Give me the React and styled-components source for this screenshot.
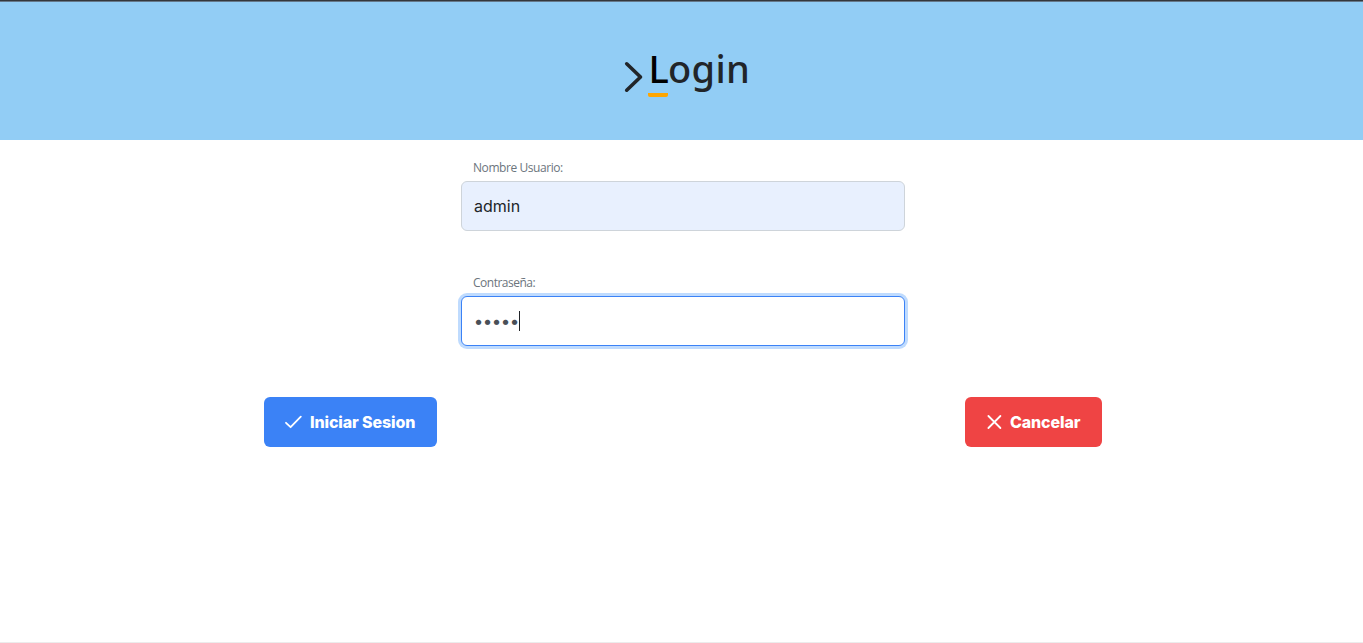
import React from 'react';
import styled, { createGlobalStyle } from 'styled-components';

const GlobalStyle = createGlobalStyle`
  *, *::before, *::after { box-sizing: border-box; }
  body { margin: 0; background: #fff; overflow: hidden; }
`;

const Page = styled.div`
  height: 643px;
  display: flex;
  flex-direction: column;
  border-bottom: 1px solid #ececec;
  font-family: "Inter", "Liberation Sans", sans-serif;
`;

const Header = styled.header`
  height: 140px;
  flex: none;
  display: flex;
  justify-content: center;
  padding: 45px 0 0 10px;
  border-top: 1px solid #34373c;
  box-shadow: inset 0 1px 0 #65788a;
  background: #92cdf5;
`;

const Chevron = styled.svg`
  width: 20px;
  height: 32px;
  margin: 15px 4px 0 0;
  fill: none;
  stroke: #212529;
  stroke-width: 3.6;
  stroke-linecap: round;
  stroke-linejoin: round;
`;

const Title = styled.h1`
  margin: 0;
  width: 101px;
  height: 51px;
  display: flex;
  color: #212529;
  font: 500 38px/44px "Noto Sans", "Open Sans", sans-serif;
  letter-spacing: 0.3px;
`;

const Initial = styled.span`
  width: 20px;
  height: 51px;
  flex: none;
  text-indent: 0.5px;
  color: #000;
  border-bottom: 4px solid orange;
  border-radius: 0 0 2px 2px;
`;

const Form = styled.form`
  display: flex;
  flex-direction: column;
  padding: 19px 261px 0 264px;
`;

const Fields = styled.div`
  width: 444px;
  margin-left: 197px;
  display: flex;
  flex-direction: column;
  gap: 43px;
`;

const Field = styled.div`
  display: flex;
  flex-direction: column;
`;

const Label = styled.label`
  height: 22px;
  padding-left: 12px;
  color: #6c757d;
  font: 400 12px/18px "Open Sans", "Noto Sans", sans-serif;
  letter-spacing: ${p => p.$spacing};
`;

const Box = styled.div`
  height: 50px;
  display: flex;
  align-items: center;
  padding: 0 12px;
  border: 1px solid ${p => (p.$focused ? '#3b82f6' : '#ced4da')};
  border-radius: 6px;
  background: ${p => (p.$focused ? '#fff' : '#e8f0fe')};
  box-shadow: ${p => (p.$focused ? '0 0 0 3px #bfdbfe' : 'none')};
  color: ${p => (p.$focused ? '#495057' : '#212529')};
  font-size: 16px;
  line-height: 20px;
`;

const Bullet = styled.span`
  width: 9px;
  display: flex;
  justify-content: center;
  font-size: 17px;
`;

const Caret = styled.span`
  width: 1px;
  height: 20px;
  background: #212529;
`;

const Actions = styled.div`
  display: flex;
  justify-content: space-between;
  margin-top: 51px;
`;

const Button = styled.button`
  width: ${p => p.$width};
  height: 50px;
  display: flex;
  align-items: center;
  gap: ${p => p.$gap};
  padding: 0 0 0 20px;
  border: 0;
  border-radius: 6px;
  background: ${p => p.$color};
  color: #fff;
  font: 800 16px/20px "Inter", "Liberation Sans", sans-serif;
  letter-spacing: ${p => p.$spacing};
  white-space: nowrap;
`;

const Icon = styled.svg`
  width: 18px;
  height: 18px;
  flex: none;
  fill: none;
  stroke: #fff;
  stroke-width: 1.8;
  stroke-linecap: round;
  stroke-linejoin: round;
`;

export default function App() {
  return (
    <Page>
      <GlobalStyle />
      <Header>
        <Chevron viewBox="0 0 20 32"><path d="M2.7 2.8 16.5 16 2.7 29.2" /></Chevron>
        <Title><Initial>L</Initial>ogin</Title>
      </Header>
      <Form>
        <Fields>
          <Field>
            <Label $spacing="-0.43px">Nombre Usuario:</Label>
            <Box>admin</Box>
          </Field>
          <Field>
            <Label $spacing="-0.5px">Contraseña:</Label>
            <Box $focused>
              {[0, 1, 2, 3, 4].map(i => <Bullet key={i}>•</Bullet>)}
              <Caret />
            </Box>
          </Field>
        </Fields>
        <Actions>
          <Button type="button" $width="173px" $color="#3b82f6" $gap="8px" $spacing="-0.12px">
            <Icon viewBox="0 0 18 18"><path d="M2 9.8 6.6 14.2 16.8 3.6" /></Icon>
            Iniciar Sesion
          </Button>
          <Button type="button" $width="137px" $color="#ef4444" $gap="7px" $spacing="-0.12px">
            <Icon viewBox="0 0 18 18"><path d="M3.4 3 15.4 15M15.4 3 3.4 15" /></Icon>
            Cancelar
          </Button>
        </Actions>
      </Form>
    </Page>
  );
}
